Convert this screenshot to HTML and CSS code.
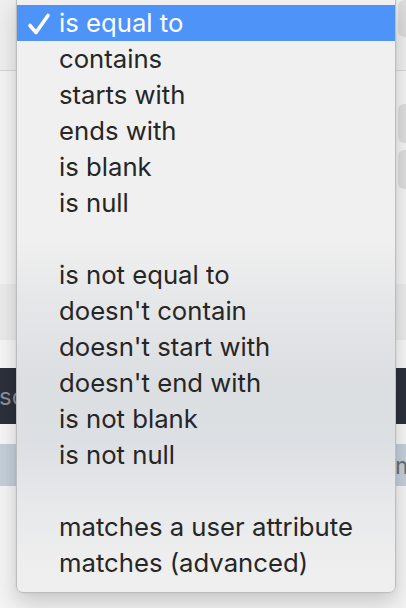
FILE: index.html
```html
<!DOCTYPE html>
<html lang="en">
<head>
<meta charset="UTF-8">
<meta name="viewport" content="width=device-width, initial-scale=1.0">
<title>Filter condition</title>
<link rel="stylesheet" href="styles.css">
</head>
<body>

<div class="page">
    <div class="toolbar">
        <span class="tool-btn"></span>
    </div>
    <div class="panel">
        <span class="field"></span>
        <span class="field"></span>
    </div>
    <div class="band"></div>
    <div class="spacer"></div>
    <div class="dark-bar"><span class="dark-text">sc</span></div>
    <div class="spacer small"></div>
    <div class="table-head"><span class="head-text">m</span></div>
    <div class="rest"></div>
</div>

<ul class="menu">
    <li class="item selected">
        <svg class="check" width="24" height="24" viewBox="0 0 24 24">
            <path d="M3 13.5 L9 20.5 L21 3.5" fill="none" stroke="#fff" stroke-width="3.6" stroke-linecap="round" stroke-linejoin="round"/>
        </svg>
        is equal to
    </li>
    <li class="item">contains</li>
    <li class="item">starts with</li>
    <li class="item">ends with</li>
    <li class="item">is blank</li>
    <li class="item">is null</li>
    <li class="item blank"></li>
    <li class="item">is not equal to</li>
    <li class="item">doesn't contain</li>
    <li class="item">doesn't start with</li>
    <li class="item">doesn't end with</li>
    <li class="item">is not blank</li>
    <li class="item">is not null</li>
    <li class="item blank"></li>
    <li class="item">matches a user attribute</li>
    <li class="item">matches (advanced)</li>
</ul>

</body>
</html>
```

FILE: styles.css
```css
body {
    margin: 0;
    padding: 0;
    background-color: #f3f3f3;
    font-family: Inter, "Noto Sans", sans-serif;
    overflow: hidden;
}

.page {
    display: flex;
    flex-direction: column;
    height: 608px;
}

.toolbar {
    height: 70px;
    background-color: #efefef;
    border-bottom: 1px solid #d6d6d6;
    display: flex;
    justify-content: flex-end;
    align-items: flex-start;
}

.tool-btn {
    width: 14px;
    height: 37px;
    margin-right: -6px;
    border-radius: 6px;
    background-color: #dcdcdc;
}

.panel {
    height: 213px;
    background-color: #f4f4f4;
    display: flex;
    flex-direction: column;
    align-items: flex-end;
    padding-top: 33px;
    gap: 7px;
    box-sizing: border-box;
}

.field {
    width: 14px;
    height: 39px;
    margin-right: -6px;
    border-radius: 6px;
    background-color: #dedede;
}

.band {
    height: 56px;
    background-color: #ebebeb;
}

.spacer {
    height: 28px;
    background-color: #f6f6f6;
}

.spacer.small {
    height: 20px;
}

.dark-bar {
    height: 56px;
    background-color: #2b303b;
    display: flex;
    align-items: center;
}

.dark-text {
    margin-left: -1px;
    color: #8a8f99;
    font-size: 24px;
}

.table-head {
    height: 42px;
    background-color: #c4cfda;
    display: flex;
    align-items: center;
    justify-content: flex-end;
}

.head-text {
    margin-right: -10px;
    color: #6a6f76;
    font-size: 24px;
}

.rest {
    flex: 1;
    background-color: #f4f4f4;
}

.menu {
    position: absolute;
    top: -1px;
    left: 16px;
    width: 378px;
    margin: 0;
    padding: 5px 0 11px;
    list-style: none;
    border: 1px solid #bdbdbd;
    border-radius: 0 0 7px 7px;
    background: linear-gradient(to bottom,
        #f0f0f0 0px,
        #f0f0f0 240px,
        #e6e7e9 300px,
        #dcdfe2 380px,
        #dcdfe3 440px,
        #e6e8ea 500px,
        #eeeeee 560px,
        #efefef 592px);
    box-shadow: 0 10px 22px rgba(0, 0, 0, 0.18), 0 0 3px rgba(0, 0, 0, 0.08);
}

.item {
    position: relative;
    height: 36px;
    line-height: 36px;
    padding-left: 42px;
    font-size: 25.7px;
    color: #262626;
}

.item.selected {
    background-color: #4e93f8;
    color: #fff;
}

.check {
    position: absolute;
    left: 10px;
    top: 7px;
}
```
